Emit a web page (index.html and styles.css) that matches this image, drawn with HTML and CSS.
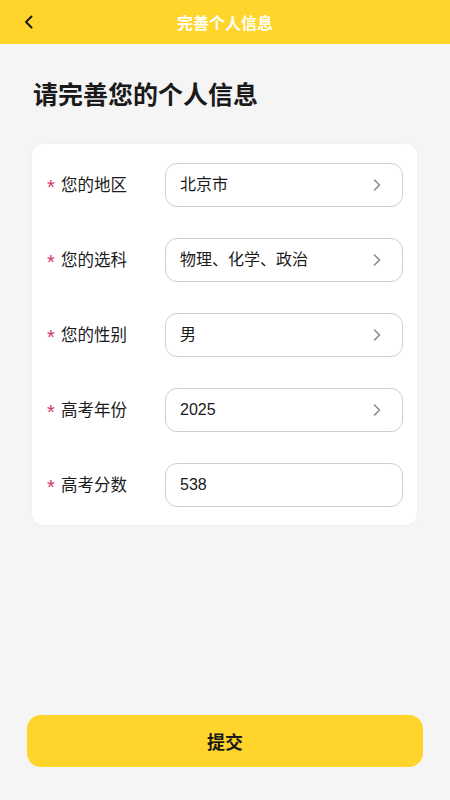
FILE: index.html
```html
<!DOCTYPE html>
<html lang="zh-CN">
<head>
    <meta charset="UTF-8">
    <meta name="viewport" content="width=device-width, initial-scale=1.0">
    <title>完善个人信息</title>
    <link rel="stylesheet" href="styles.css">
</head>
<body>
    <div class="page">
        <header class="topbar">
            <span class="back">
                <svg width="14" height="14" viewBox="0 0 14 14"><path d="M9.5 1.5 L4 7 L9.5 12.5" fill="none" stroke="#1a1a1a" stroke-width="2" stroke-linecap="round" stroke-linejoin="round"/></svg>
            </span>
            <span class="topbar-title">完善个人信息</span>
        </header>

        <h1 class="heading">请完善您的个人信息</h1>

        <div class="card">
            <div class="row">
                <label class="label"><span class="star">*</span>您的地区</label>
                <div class="field">
                    <span>北京市</span>
                    <svg class="arrow" width="10" height="14" viewBox="0 0 10 14"><path d="M2.5 2 L7.5 7 L2.5 12" fill="none" stroke="#8a8a8a" stroke-width="1.6" stroke-linecap="round" stroke-linejoin="round"/></svg>
                </div>
            </div>
            <div class="row">
                <label class="label"><span class="star">*</span>您的选科</label>
                <div class="field">
                    <span>物理、化学、政治</span>
                    <svg class="arrow" width="10" height="14" viewBox="0 0 10 14"><path d="M2.5 2 L7.5 7 L2.5 12" fill="none" stroke="#8a8a8a" stroke-width="1.6" stroke-linecap="round" stroke-linejoin="round"/></svg>
                </div>
            </div>
            <div class="row">
                <label class="label"><span class="star">*</span>您的性别</label>
                <div class="field">
                    <span>男</span>
                    <svg class="arrow" width="10" height="14" viewBox="0 0 10 14"><path d="M2.5 2 L7.5 7 L2.5 12" fill="none" stroke="#8a8a8a" stroke-width="1.6" stroke-linecap="round" stroke-linejoin="round"/></svg>
                </div>
            </div>
            <div class="row">
                <label class="label"><span class="star">*</span>高考年份</label>
                <div class="field">
                    <span>2025</span>
                    <svg class="arrow" width="10" height="14" viewBox="0 0 10 14"><path d="M2.5 2 L7.5 7 L2.5 12" fill="none" stroke="#8a8a8a" stroke-width="1.6" stroke-linecap="round" stroke-linejoin="round"/></svg>
                </div>
            </div>
            <div class="row">
                <label class="label"><span class="star">*</span>高考分数</label>
                <div class="field">
                    <span>538</span>
                </div>
            </div>
        </div>

        <div class="footer">
            <button class="submit">提交</button>
        </div>
    </div>
</body>
</html>
```

FILE: styles.css
```css
body {
    margin: 0;
    padding: 0;
    background-color: #f5f5f5;
    font-family: "Noto Sans CJK SC", "Noto Sans", sans-serif;
    color: #1a1a1a;
}

.page {
    display: flex;
    flex-direction: column;
    min-height: 100vh;
}

.topbar {
    height: 44px;
    background-color: #ffd52b;
    display: flex;
    align-items: center;
    justify-content: center;
    position: relative;
}

.back {
    position: absolute;
    left: 22px;
    top: 15px;
    display: flex;
}

.topbar-title {
    color: #fff;
    font-size: 16px;
    font-weight: bold;
}

.heading {
    margin: 31px 0 33px 33px;
    font-size: 25px;
    line-height: 36px;
    font-weight: bold;
    color: #1a1a1a;
}

.card {
    margin: 0 33px 0 32px;
    padding: 19px 14px 18px 15px;
    background: #fff;
    border-radius: 12px;
    box-shadow: 0 0 4px rgba(0, 0, 0, 0.03);
    display: flex;
    flex-direction: column;
    gap: 31px;
}

.row {
    display: flex;
    align-items: center;
}

.label {
    width: 118px;
    font-size: 16.5px;
    line-height: 22px;
    display: flex;
    align-items: center;
    margin-top: -2px;
}

.star {
    color: #d6336c;
    font-family: "Liberation Sans", sans-serif;
    font-size: 20px;
    width: 14px;
    position: relative;
    top: 3px;
}

.field {
    flex: 1;
    height: 42px;
    border: 1px solid #cfcfcf;
    border-radius: 12px;
    display: flex;
    align-items: center;
    justify-content: space-between;
    padding: 0 20px 0 14px;
    font-family: "Liberation Sans", "Noto Sans CJK SC", sans-serif;
    font-size: 16px;
    line-height: 22px;
}

.footer {
    margin-top: auto;
    padding: 0 27px 33px;
}

.submit {
    width: 100%;
    height: 52px;
    border: none;
    border-radius: 14px;
    background-color: #ffd52b;
    color: #1a1a1a;
    font-family: "Noto Sans CJK SC", "Noto Sans", sans-serif;
    font-size: 18px;
    font-weight: bold;
    cursor: pointer;
}
```
